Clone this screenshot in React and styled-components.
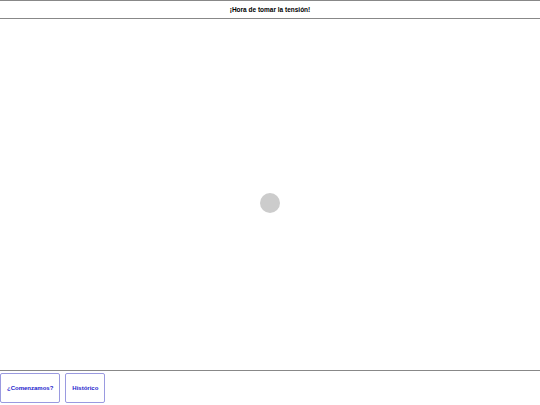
import React from "react";
import styled, { createGlobalStyle } from "styled-components";

const Global = createGlobalStyle`
  html, body { margin: 0; padding: 0; background: #fff; }
  body { font-family: "Liberation Sans", Arial, sans-serif; }
  #root { height: 100vh; }
`;

const Page = styled.div`
  height: 100vh;
  display: flex;
  flex-direction: column;
  box-sizing: border-box;
`;

const Header = styled.header`
  height: 19px;
  box-sizing: border-box;
  border-top: 1px solid #888;
  border-bottom: 1px solid #888;
  display: flex;
  align-items: center;
  justify-content: center;
  font-size: 6.5px;
  font-weight: bold;
  color: #000;
`;

const Main = styled.main`
  flex: 1;
`;

const Overlay = styled.div`
  position: fixed;
  inset: 0;
  display: flex;
  align-items: center;
  justify-content: center;
  pointer-events: none;
`;

const Spinner = styled.div`
  width: 20px;
  height: 20px;
  border-radius: 50%;
  background: #cccccc;
`;

const Footer = styled.footer`
  border-top: 1px solid #888;
  padding: 2px 0 2px 0;
  display: flex;
  gap: 5px;
`;

const Button = styled.button`
  height: 30px;
  padding: 0 6px;
  background: #fff;
  border: 1px solid #9a9ae0;
  border-radius: 2px;
  color: #2222cc;
  font-family: "Liberation Sans", Arial, sans-serif;
  font-size: 6px;
  font-weight: bold;
  cursor: pointer;
`;

export default function App() {
  return (
    <Page>
      <Global />
      <Header>¡Hora de tomar la tensión!</Header>
      <Main />
      <Overlay>
        <Spinner />
      </Overlay>
      <Footer>
        <Button>¿Comenzamos?</Button>
        <Button>Histórico</Button>
      </Footer>
    </Page>
  );
}
